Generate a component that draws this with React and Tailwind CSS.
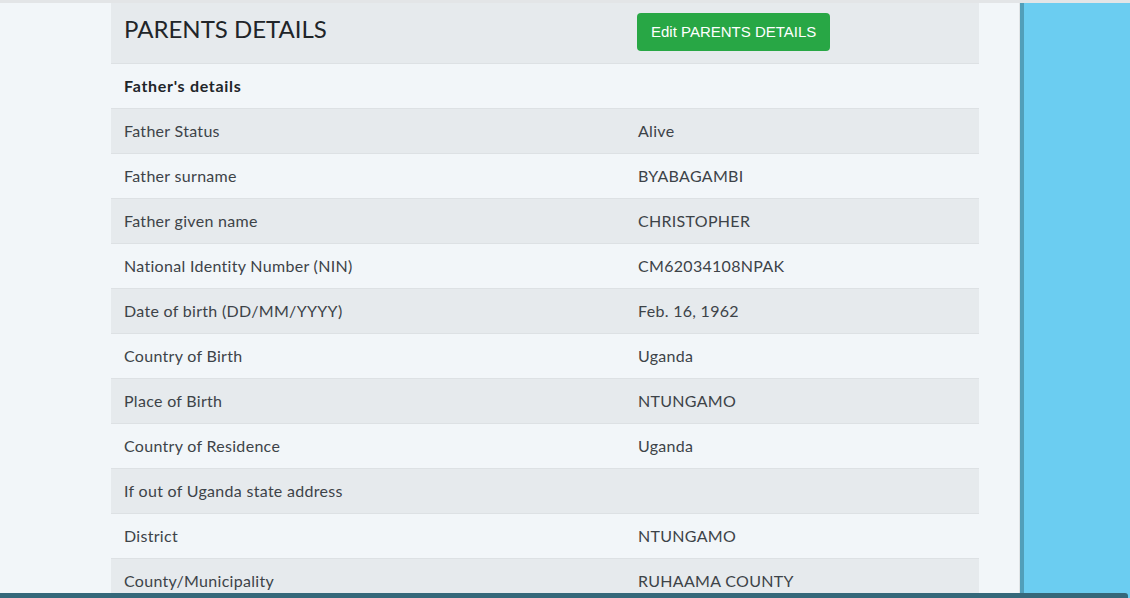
export default function App() {
  const rows = [
    ["Father Status", "Alive"],
    ["Father surname", "BYABAGAMBI"],
    ["Father given name", "CHRISTOPHER"],
    ["National Identity Number (NIN)", "CM62034108NPAK"],
    ["Date of birth (DD/MM/YYYY)", "Feb. 16, 1962"],
    ["Country of Birth", "Uganda"],
    ["Place of Birth", "NTUNGAMO"],
    ["Country of Residence", "Uganda"],
    ["If out of Uganda state address", ""],
    ["District", "NTUNGAMO"],
    ["County/Municipality", "RUHAAMA COUNTY"],
  ];
  return (
    <div
      className="relative h-[598px] w-[1130px] overflow-hidden bg-[#f2f6f9] text-[#3d4348]"
      style={{ fontFamily: "Lato, 'Noto Sans', sans-serif" }}
    >
      <div className="h-[3px] bg-[#e3e5e7]" />
      <div className="flex">
        <div className="w-[1019px] shrink-0 pl-[111px]">
          <div className="w-[868px]">
            <div className="flex h-[61px] border-b border-[#dde1e4] bg-[#e6eaed]">
              <div className="w-[514px] pl-[13px] pt-[12px] text-[24px] leading-[28px] text-[#212529]">
                PARENTS DETAILS
              </div>
              <div className="pl-[12px] pt-[10px]">
                <button
                  className="h-[38px] rounded-[4px] bg-[#28a745] px-[14px] text-[15px] text-white"
                  style={{ fontFamily: "'Liberation Sans', Arial, sans-serif" }}
                >
                  Edit PARENTS DETAILS
                </button>
              </div>
            </div>
            <div className="flex h-[45px] items-center border-b border-[#dde1e4] bg-[#f2f6f9] pl-[13px] text-[16px] font-bold tracking-[0.7px] text-[#212529]">
              Father's details
            </div>
            {rows.map(([k, v], i) => (
              <div
                key={k}
                className={
                  "flex h-[45px] items-center border-b border-[#dde1e4] text-[16px] tracking-[0.3px] " +
                  (i % 2 === 0 ? "bg-[#e6eaed]" : "bg-[#f2f6f9]")
                }
              >
                <div className="w-[514px] pl-[13px]">{k}</div>
                <div className="pl-[13px]">{v}</div>
              </div>
            ))}
          </div>
        </div>
        <div className="w-px shrink-0 bg-[#e1e4e6]" />
        <div className="h-[595px] w-[4px] shrink-0 bg-[#519fba]" />
        <div className="h-[595px] flex-1 bg-[#6bcdf1]" />
      </div>
      <div className="absolute bottom-0 left-0 h-[5px] w-[1128px] rounded-tr-[3px] bg-[#35687a]" />
    </div>
  );
}
